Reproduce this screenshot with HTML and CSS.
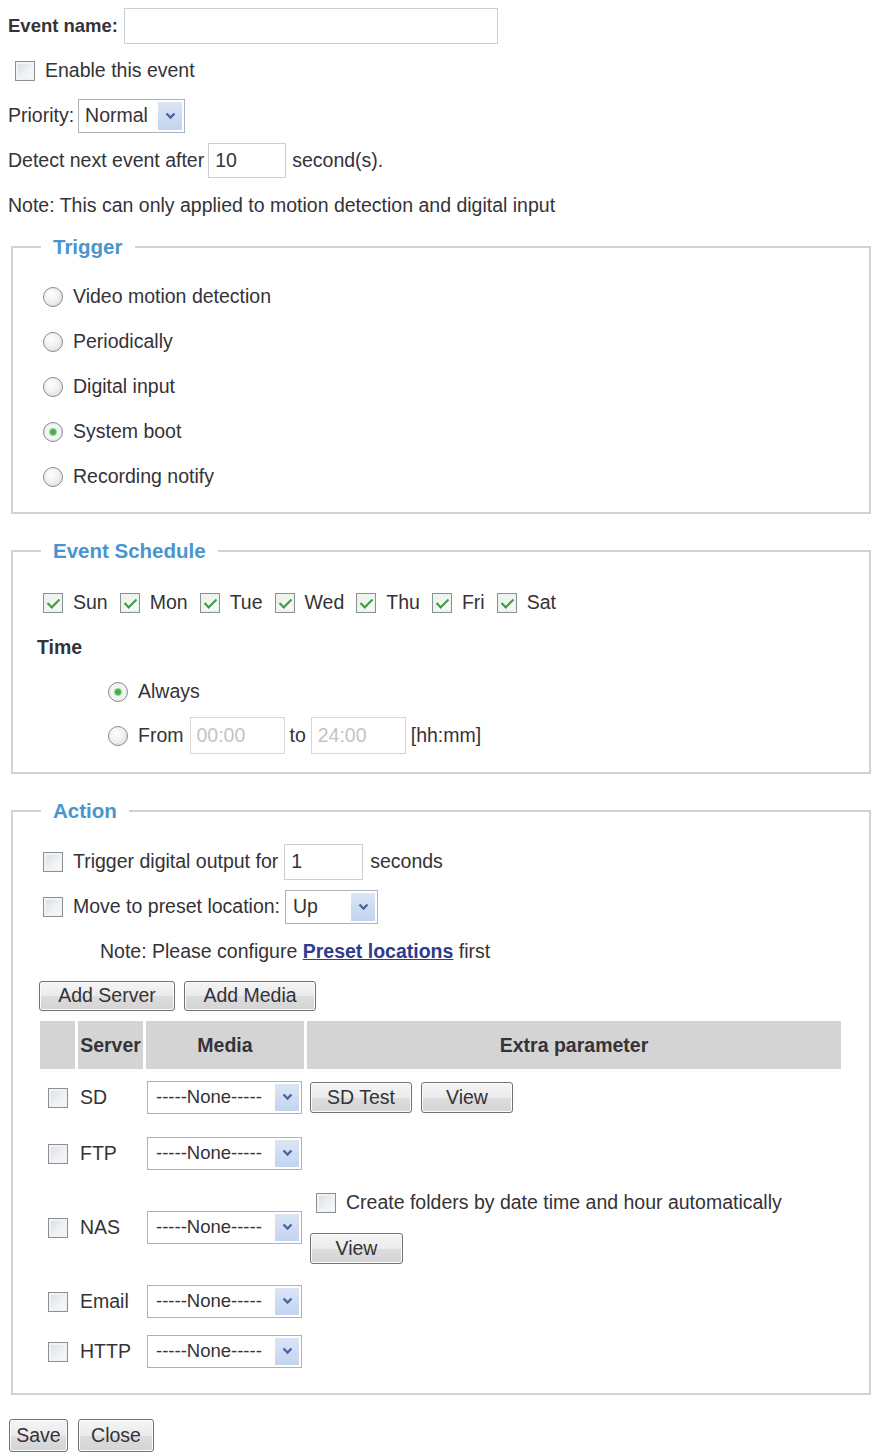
FILE: index.html
```html
<!DOCTYPE html>
<html lang="en">
<head>
<meta charset="utf-8">
<title>Event Settings</title>
<link rel="stylesheet" href="styles.css">
</head>
<body>
<form class="page">
  <div class="row">
    <label class="strong title" for="evname">Event name:</label>
    <input id="evname" class="textbox name" type="text">
  </div>
  <div class="row indent7">
    <label class="opt"><input class="cb" type="checkbox"><span>Enable this event</span></label>
  </div>
  <div class="row">
    <span>Priority:</span>
    <span class="select pri"><span class="val">Normal</span><span class="drop"><svg width="11" height="8" viewBox="0 0 11 8"><path d="M1.5 1.5 L5.5 5.5 L9.5 1.5" fill="none" stroke="#4a64a0" stroke-width="2.3"/></svg></span></span>
  </div>
  <div class="row">
    <span>Detect next event after</span>
    <input class="textbox delay" type="text" value="10">
    <span>second(s).</span>
  </div>
  <div class="row">
    <span>Note: This can only applied to motion detection and digital input</span>
  </div>

  <fieldset class="box trigger">
    <legend>Trigger</legend>
    <div class="inner">
      <label class="row opt"><input class="rb" type="radio" name="trig"><span>Video motion detection</span></label>
      <label class="row opt"><input class="rb" type="radio" name="trig"><span>Periodically</span></label>
      <label class="row opt"><input class="rb" type="radio" name="trig"><span>Digital input</span></label>
      <label class="row opt"><input class="rb" type="radio" name="trig" checked><span>System boot</span></label>
      <label class="row opt"><input class="rb" type="radio" name="trig"><span>Recording notify</span></label>
    </div>
  </fieldset>

  <fieldset class="box schedule">
    <legend>Event Schedule</legend>
    <div class="inner">
      <div class="row days">
        <label class="opt"><input class="cb" type="checkbox" checked><span>Sun</span></label>
        <label class="opt"><input class="cb" type="checkbox" checked><span>Mon</span></label>
        <label class="opt"><input class="cb" type="checkbox" checked><span>Tue</span></label>
        <label class="opt"><input class="cb" type="checkbox" checked><span>Wed</span></label>
        <label class="opt"><input class="cb" type="checkbox" checked><span>Thu</span></label>
        <label class="opt"><input class="cb" type="checkbox" checked><span>Fri</span></label>
        <label class="opt"><input class="cb" type="checkbox" checked><span>Sat</span></label>
      </div>
      <div class="row time-title"><span class="strong">Time</span></div>
      <label class="row opt time-opt always"><input class="rb" type="radio" name="when" checked><span>Always</span></label>
      <div class="row time-opt from">
        <label class="opt"><input class="rb" type="radio" name="when"><span>From</span></label>
        <input class="textbox hour" type="text" value="00:00" disabled>
        <span>to</span>
        <input class="textbox hour to" type="text" value="24:00" disabled>
        <span>[hh:mm]</span>
      </div>
    </div>
  </fieldset>

  <fieldset class="box action">
    <legend>Action</legend>
    <div class="inner">
      <div class="row indent6">
        <label class="opt"><input class="cb" type="checkbox"><span>Trigger digital output for</span></label>
        <input class="textbox secs" type="text" value="1">
        <span>seconds</span>
      </div>
      <div class="row indent6 preset-row">
        <label class="opt"><input class="cb" type="checkbox"><span>Move to preset location:</span></label>
        <span class="select preset"><span class="val">Up</span><span class="drop"><svg width="11" height="8" viewBox="0 0 11 8"><path d="M1.5 1.5 L5.5 5.5 L9.5 1.5" fill="none" stroke="#4a64a0" stroke-width="2.3"/></svg></span></span>
      </div>
      <div class="row note-row">
        <span>Note: Please configure <a class="link" href="#">Preset locations</a> first</span>
      </div>
      <div class="row btn-row">
        <button type="button" class="btn add-server">Add Server</button>
        <button type="button" class="btn add-media">Add Media</button>
      </div>
      <table class="dest">
        <colgroup>
          <col class="col-cb"><col class="col-server"><col class="col-media"><col class="col-extra">
        </colgroup>
        <thead>
          <tr><th></th><th>Server</th><th>Media</th><th>Extra parameter</th></tr>
        </thead>
        <tbody>
          <tr class="r-sd">
            <td class="c-cb"><input class="cb" type="checkbox"></td>
            <td class="c-name">SD</td>
            <td class="c-media"><span class="select media"><span class="val">-----None-----</span><span class="drop"><svg width="11" height="8" viewBox="0 0 11 8"><path d="M1.5 1.5 L5.5 5.5 L9.5 1.5" fill="none" stroke="#4a64a0" stroke-width="2.3"/></svg></span></span></td>
            <td class="c-extra"><div class="btns"><button type="button" class="btn sd-test">SD Test</button><button type="button" class="btn view">View</button></div></td>
          </tr>
          <tr class="r-ftp">
            <td class="c-cb"><input class="cb" type="checkbox"></td>
            <td class="c-name">FTP</td>
            <td class="c-media"><span class="select media"><span class="val">-----None-----</span><span class="drop"><svg width="11" height="8" viewBox="0 0 11 8"><path d="M1.5 1.5 L5.5 5.5 L9.5 1.5" fill="none" stroke="#4a64a0" stroke-width="2.3"/></svg></span></span></td>
            <td class="c-extra"></td>
          </tr>
          <tr class="r-nas">
            <td class="c-cb"><input class="cb" type="checkbox"></td>
            <td class="c-name">NAS</td>
            <td class="c-media"><span class="select media"><span class="val">-----None-----</span><span class="drop"><svg width="11" height="8" viewBox="0 0 11 8"><path d="M1.5 1.5 L5.5 5.5 L9.5 1.5" fill="none" stroke="#4a64a0" stroke-width="2.3"/></svg></span></span></td>
            <td class="c-extra">
              <div class="stack">
                <label class="opt folders"><input class="cb" type="checkbox"><span>Create folders by date time and hour automatically</span></label>
                <button type="button" class="btn view nas-view">View</button>
              </div>
            </td>
          </tr>
          <tr class="r-email">
            <td class="c-cb"><input class="cb" type="checkbox"></td>
            <td class="c-name">Email</td>
            <td class="c-media"><span class="select media"><span class="val">-----None-----</span><span class="drop"><svg width="11" height="8" viewBox="0 0 11 8"><path d="M1.5 1.5 L5.5 5.5 L9.5 1.5" fill="none" stroke="#4a64a0" stroke-width="2.3"/></svg></span></span></td>
            <td class="c-extra"></td>
          </tr>
          <tr class="r-http">
            <td class="c-cb"><input class="cb" type="checkbox"></td>
            <td class="c-name">HTTP</td>
            <td class="c-media"><span class="select media"><span class="val">-----None-----</span><span class="drop"><svg width="11" height="8" viewBox="0 0 11 8"><path d="M1.5 1.5 L5.5 5.5 L9.5 1.5" fill="none" stroke="#4a64a0" stroke-width="2.3"/></svg></span></span></td>
            <td class="c-extra"></td>
          </tr>
        </tbody>
      </table>
    </div>
  </fieldset>

  <div class="footer">
    <button type="button" class="btn save">Save</button>
    <button type="button" class="btn close">Close</button>
  </div>
</form>
</body>
</html>
```

FILE: styles.css
```css
* {
  box-sizing: border-box;
}

body {
  margin: 0;
  background: #fff;
  font-family: Arial, "Liberation Sans", sans-serif;
  font-size: 19.5px;
  color: #353238;
}

.page {
  width: 871px;
  padding: 3px 0 0 8px;
}

.row {
  display: flex;
  align-items: center;
  height: 45px;
  white-space: nowrap;
}

.strong {
  font-weight: bold;
}

.title {
  font-size: 18.5px;
}

.indent7 {
  padding-left: 7px;
}

.indent6 {
  padding-left: 6px;
}

/* label + box pairs */
.opt {
  display: inline-flex;
  align-items: center;
  gap: 10px;
  cursor: default;
}

label.row.opt {
  display: flex;
}

/* checkboxes */
.cb {
  appearance: none;
  -webkit-appearance: none;
  position: relative;
  width: 20px;
  height: 20px;
  margin: 0;
  flex: none;
  border: 1px solid #8b9096;
  background: linear-gradient(135deg, #d9dde2 0%, #eef0f2 55%, #fbfbfb 100%);
  box-shadow: inset 0 0 0 2px #f1f2f3;
}

.cb:checked {
  background: linear-gradient(135deg, #e6f1e6, #fbfdfb);
  box-shadow: inset 0 0 0 2px #eef3ee;
}

.cb:checked::after {
  content: "";
  position: absolute;
  left: 6px;
  top: 2px;
  width: 5px;
  height: 10px;
  border: solid #3d9b3d;
  border-width: 0 2.5px 2.5px 0;
  transform: rotate(45deg);
}

/* radio buttons */
.rb {
  appearance: none;
  -webkit-appearance: none;
  width: 20px;
  height: 20px;
  margin: 0;
  flex: none;
  border: 1px solid #878c92;
  border-radius: 50%;
  background: radial-gradient(circle at 40% 35%, #ffffff 0%, #f1f1f1 45%, #d6d8da 100%);
}

.rb:checked {
  background: radial-gradient(circle, #3f9e41 0, #5cb85c 3px, #d9eed9 4px, #f7f7f7 5.5px, #e0e2e4 100%);
}

/* text boxes */
.textbox {
  height: 36px;
  margin: 0;
  padding: 0 6px;
  border: 1px solid #cbcfd4;
  background: #fff;
  font: inherit;
  color: #353238;
}

.textbox.name {
  width: 374px;
  margin-left: 6px;
}

.textbox.delay {
  width: 78px;
  height: 35px;
  margin: 0 6px 0 4px;
}

.textbox.hour {
  width: 95px;
  height: 37px;
  margin: 0 5px 0 6px;
  border-color: #d6d6d6;
  color: #c4c4c4;
}

.textbox.hour.to {
  margin-left: 5px;
}

.textbox.secs {
  width: 79px;
  margin: 0 7px 0 6px;
}

/* drop-down boxes */
.select {
  display: inline-flex;
  align-items: stretch;
  height: 34px;
  padding: 2px;
  border: 1px solid #aab2bc;
  background: #fff;
  flex: none;
}

.select .val {
  flex: 1;
  display: flex;
  align-items: center;
  padding-left: 5px;
  white-space: nowrap;
}

.select .drop {
  width: 24px;
  display: flex;
  align-items: center;
  justify-content: center;
  background: linear-gradient(#dbe5f5, #c3d4ef);
}

.select.pri {
  width: 107px;
  margin-left: 4px;
}

.select.pri .val {
  padding-left: 4px;
}

.select.preset {
  width: 93px;
  margin-left: 5px;
}

.select.media {
  width: 155px;
  height: 33px;
}

.select.media .val {
  padding-left: 6px;
  font-size: 18.5px;
}

/* fieldsets */
.box {
  margin: 0 0 0 3px;
  padding: 0;
  min-width: 0;
  border: 2px solid #d2d2d2;
}

.box legend {
  margin-left: 28px;
  padding: 0 12px;
  font-size: 20.5px;
  line-height: 24px;
  font-weight: bold;
  color: #4895cf;
}

.trigger {
  margin-top: 7px;
}

.trigger .inner {
  padding: 15px 0 13px 30px;
}

.schedule {
  margin-top: 25px;
}

.schedule .inner {
  padding: 17px 0 15px 24px;
}

.days {
  padding-left: 6px;
}

.days .opt {
  margin-right: 12px;
}

.time-title {
  height: 44px;
}

.time-opt {
  padding-left: 71px;
}

.time-opt.from {
  height: 43px;
}

.action {
  margin-top: 25px;
}

.action .inner {
  padding: 16px 0 20px 24px;
}

.note-row {
  height: 44px;
  padding-left: 63px;
}

.link {
  color: #2e3b8e;
  font-weight: bold;
  text-decoration: underline;
}

.btn-row {
  padding-left: 2px;
  gap: 9px;
}

/* push buttons */
.btn {
  height: 30px;
  margin: 0;
  padding: 0;
  border: 1px solid #6f7378;
  border-radius: 3px;
  background: linear-gradient(#f4f4f4 0%, #ebebeb 50%, #dddddd 51%, #d4d4d4 100%);
  box-shadow: inset 0 0 0 1px #fbfbfb;
  font: inherit;
  color: #353238;
  text-align: center;
}

.add-server {
  width: 136px;
}

.add-media {
  width: 132px;
}

.sd-test {
  width: 102px;
  height: 31px;
}

.view {
  width: 92px;
  height: 31px;
}

.nas-view {
  width: 93px;
}

/* destination table */
.dest {
  width: 807px;
  margin-left: 0;
  border-collapse: separate;
  border-spacing: 3px;
  table-layout: fixed;
}

.col-cb {
  width: 35px;
}

.col-server {
  width: 65px;
}

.col-media {
  width: 158px;
}

.dest th {
  height: 48px;
  padding: 0;
  background: #d4d4d4;
  font-weight: bold;
  text-align: center;
}

.dest td {
  padding: 0;
  vertical-align: middle;
  white-space: nowrap;
}

.dest .c-cb {
  text-align: center;
}

.dest .c-cb .cb {
  vertical-align: middle;
  margin-left: 1px;
}

.dest .c-name {
  padding-left: 2px;
}

.dest .c-media {
  padding-left: 1px;
}

.dest .c-extra {
  padding-left: 3px;
}

.r-sd td {
  height: 50px;
}

.r-ftp td {
  height: 56px;
}

.r-nas td {
  height: 86px;
}

.r-email td {
  height: 56px;
}

.r-http td {
  height: 38px;
}

.btns {
  display: flex;
  gap: 9px;
}

.stack {
  display: flex;
  flex-direction: column;
  align-items: flex-start;
  gap: 18px;
}

.folders {
  margin-left: 6px;
  height: 24px;
}

/* bottom buttons */
.footer {
  display: flex;
  gap: 10px;
  margin-top: 24px;
  padding-left: 1px;
}

.save {
  width: 59px;
  height: 33px;
}

.close {
  width: 76px;
  height: 33px;
}
```
